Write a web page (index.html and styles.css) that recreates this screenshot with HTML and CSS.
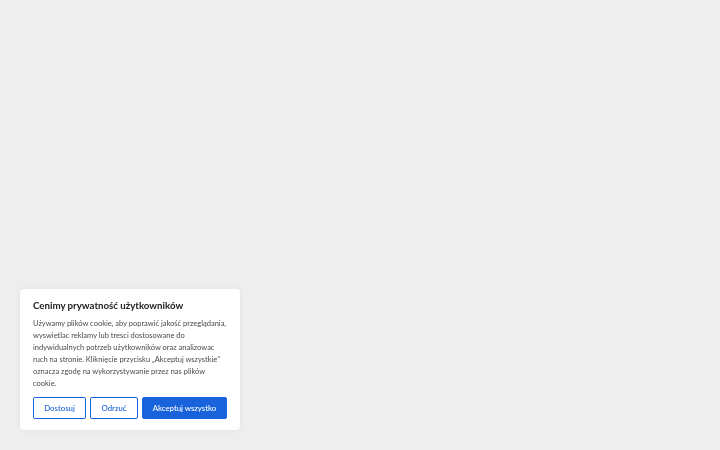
FILE: index.html
```html
<!DOCTYPE html>
<html lang="pl">
<head>
<meta charset="utf-8">
<title>Cookie</title>
<link rel="stylesheet" href="styles.css">
</head>
<body>
<div class="consent">
  <p class="consent-title">Cenimy prywatność użytkowników</p>
  <p class="consent-text">Używamy plików cookie, aby poprawić jakość przeglądania, wyswietlac reklamy lub tresci dostosowane do indywidualnych potrzeb użytkowników oraz analizowac ruch na stronie. Kliknięcie przycisku „Akceptuj wszystkie” oznacza zgodę na wykorzystywanie przez nas plików cookie.</p>
  <div class="consent-actions">
    <button class="btn btn-outline">Dostosuj</button>
    <button class="btn btn-outline">Odrzuć</button>
    <button class="btn btn-primary">Akceptuj wszystko</button>
  </div>
</div>
</body>
</html>
```

FILE: styles.css
```css
html, body {
  margin: 0;
  padding: 0;
  height: 100%;
}
body {
  background: #eeeeee;
  font-family: "Lato", "Open Sans", sans-serif;
}
.consent {
  position: fixed;
  left: 20px;
  bottom: 20px;
  width: 220px;
  box-sizing: border-box;
  padding: 9px 13px 11px;
  background: #ffffff;
  border-radius: 4px;
  box-shadow: 0 0 6px rgba(0, 0, 0, 0.06);
}
.consent-title {
  margin: 0;
  font-size: 9.7px;
  line-height: 14px;
  font-weight: 700;
  color: #212121;
}
.consent-text {
  margin: 6px 0 0;
  font-size: 7.5px;
  line-height: 12px;
  color: #4a4a4a;
}
.consent-actions {
  margin-top: 7px;
  display: grid;
  grid-template-columns: 53px 48px 1fr;
  gap: 4px;
}
.btn {
  height: 22px;
  padding: 0;
  font-family: inherit;
  font-size: 7.8px;
  font-weight: 500;
  border-radius: 2px;
  border: 1.5px solid #1863dc;
  box-sizing: border-box;
  cursor: pointer;
}
.btn-outline {
  background: #ffffff;
  color: #1863dc;
}
.btn-primary {
  background: #1863dc;
  color: #ffffff;
}
```
